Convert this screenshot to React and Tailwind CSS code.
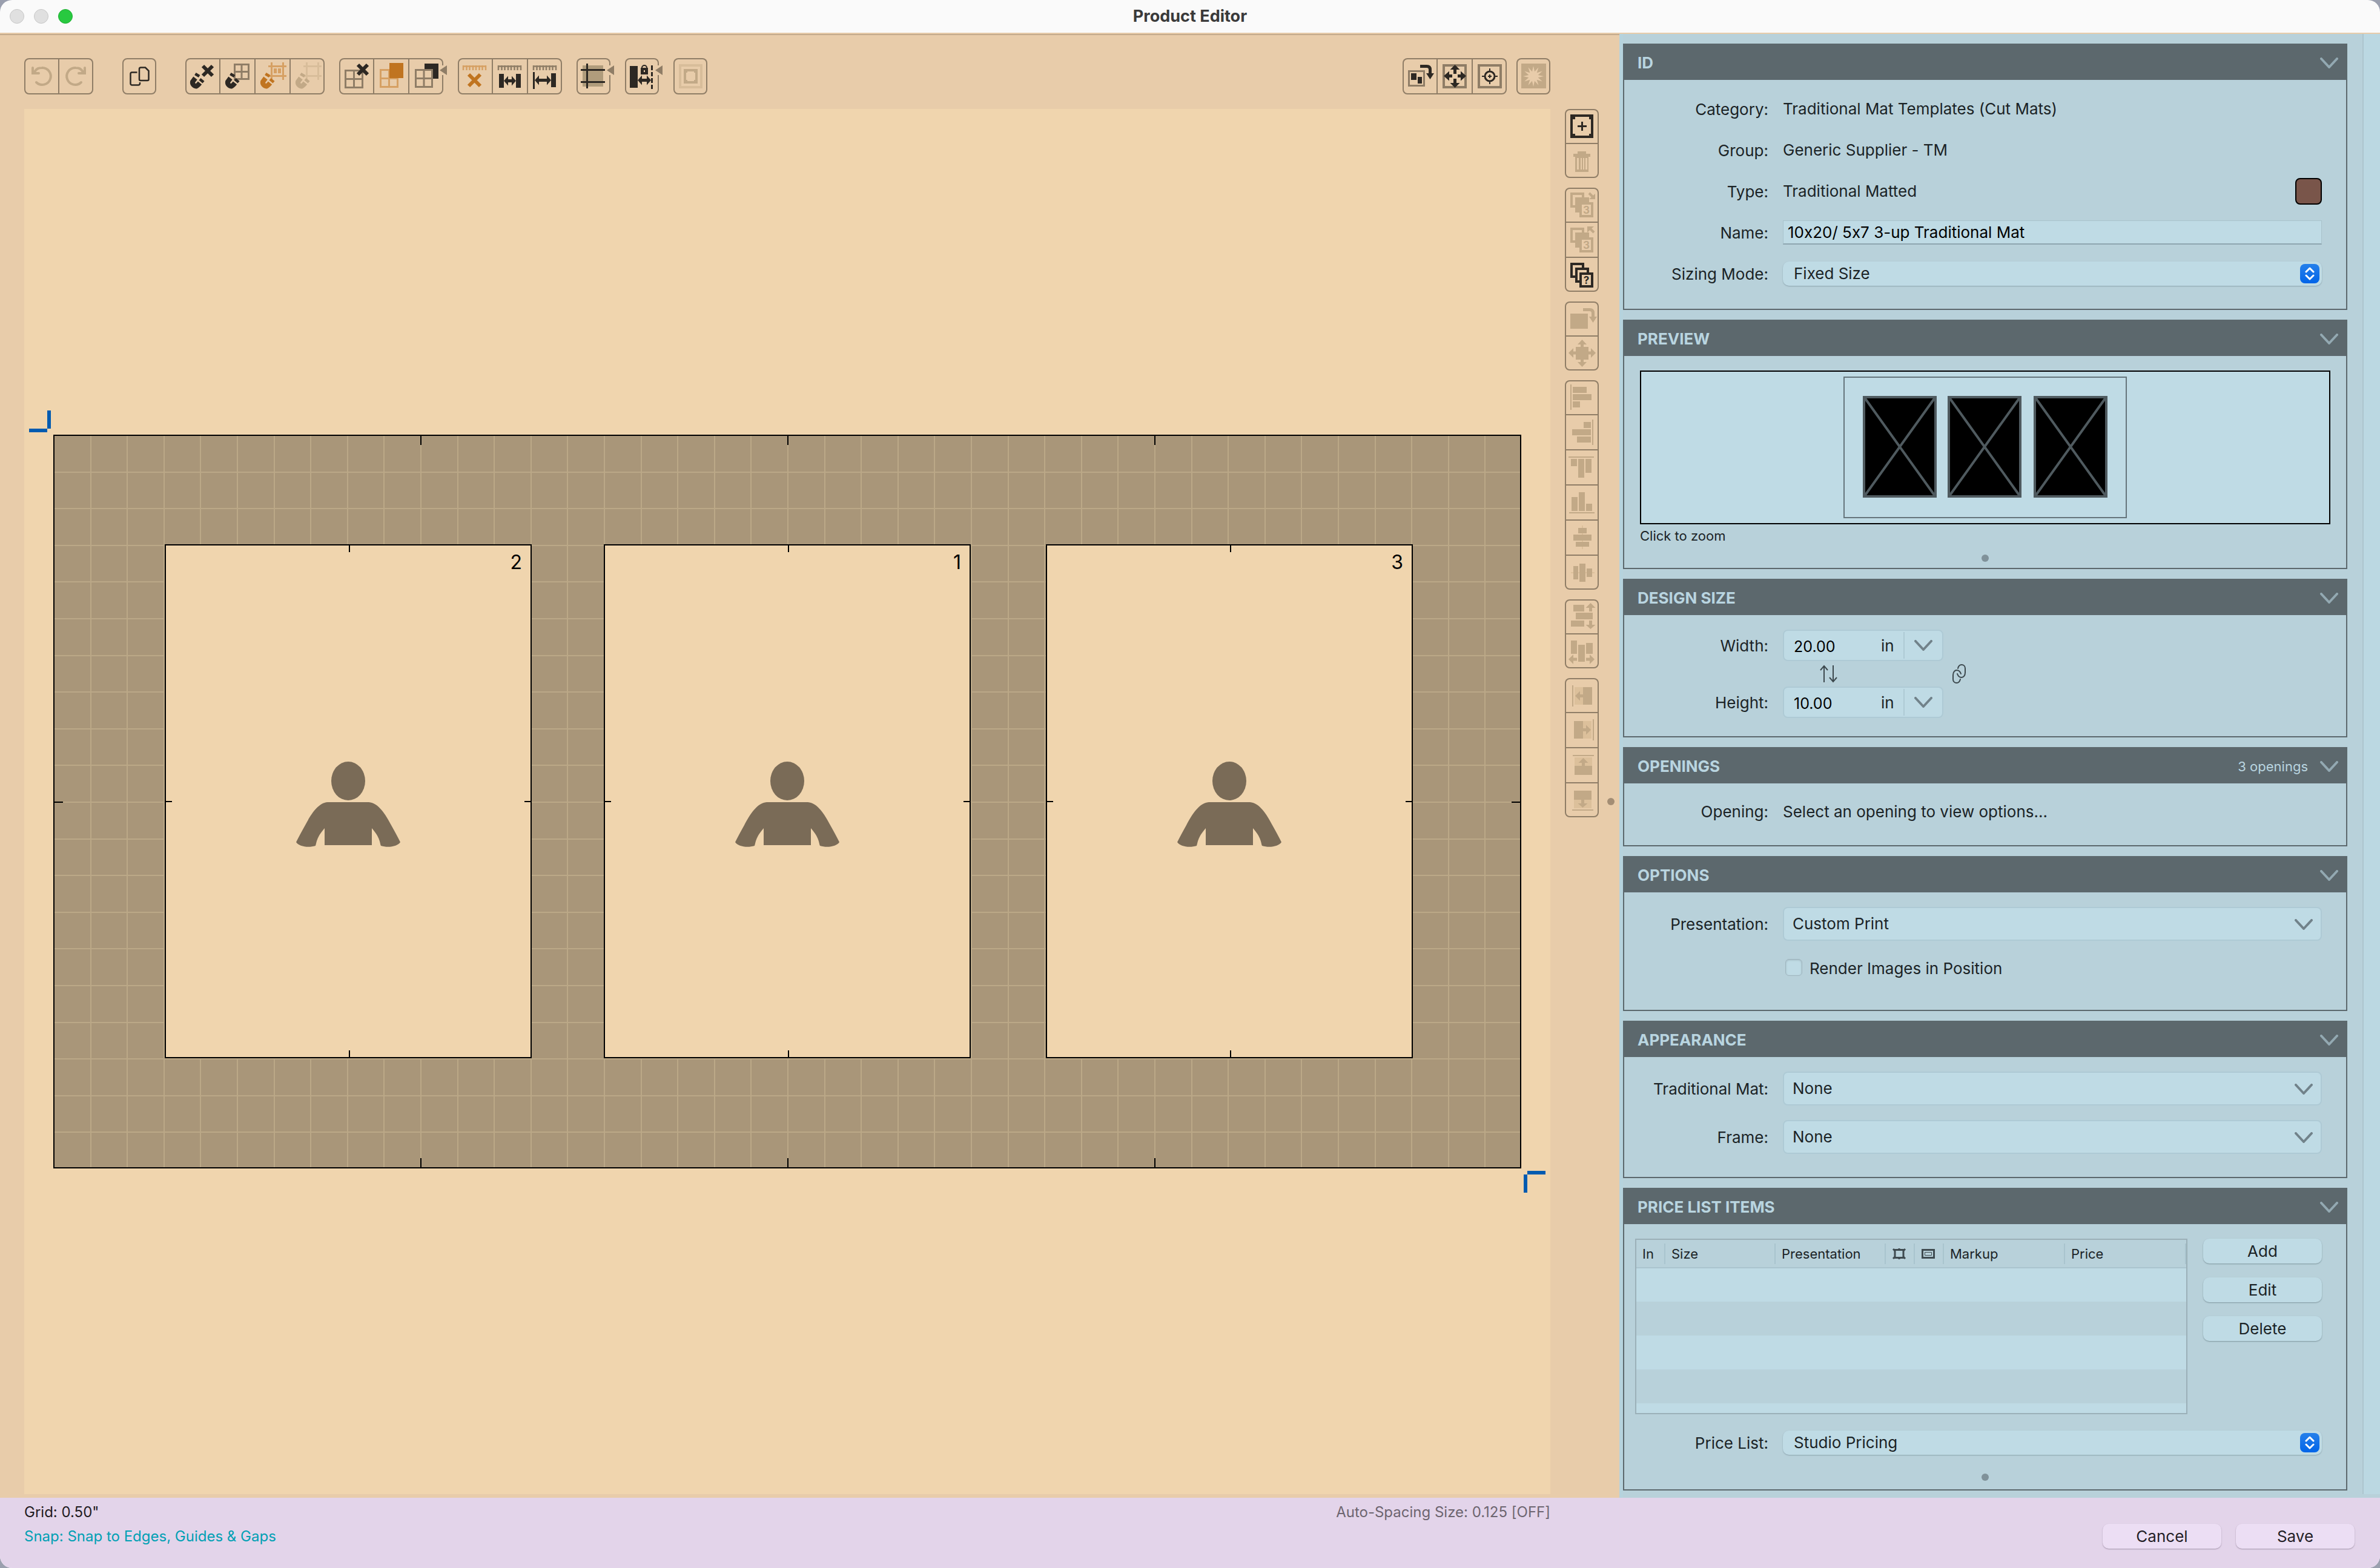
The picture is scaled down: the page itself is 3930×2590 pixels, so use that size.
import { useState } from 'react';

const INK = '#2d2823';
const MID = '#8f7d66';
const DIM = '#c2a987';
const PALE = '#d8bd9a';
const GHOST = '#dcc09b';
const ORANGE = '#c07420';
const PEACH = '#d6a063';
const PAPER = '#e8ccaa';

/* ---------- shared icon parts ---------- */

const Bars = ({ list, fill = DIM }) =>
  list.map(([x, y, w, h]) => <rect key={`${x}-${y}`} x={x} y={y} width={w} height={h} fill={fill} />);

const Cross = ({ x, y, size = 15, color = INK }) => (
  <path d={`M${x} ${y}l${size} ${size}M${x + size} ${y}l${-size} ${size}`} stroke={color} strokeWidth="6" fill="none" />
);

const Magnet = ({ color = INK }) => (
  <g stroke={color} strokeWidth="8" fill="none">
    <path d="M16.500 33L12 39A6.500 6.500 0 0 0 18 46.500Q20.500 45.500 24 41" />
    <path d="M18.500 30l2.500-4" />
    <path d="M25.500 39l3-3.500" />
  </g>
);

const Grid4 = ({ x, y, w, h, color = MID, fill = 'none' }) => (
  <g stroke={color} strokeWidth="3" fill={fill}>
    <rect x={x + 1.5} y={y + 1.5} width={w - 3} height={h - 3} />
    <path d={`M${x + w / 2} ${y}v${h}M${x} ${y + h / 2}h${w}`} />
  </g>
);

const Guides = ({ color }) => (
  <path d="M21 13.500h30M21 29.500h30M26.500 7v29M45.500 7v29" stroke={color} strokeWidth="3" fill="none" />
);

const Ruler = ({ color = MID }) => (
  <path d="M8 13.500h39M9 12v8M14.500 12v8M19.500 12v8M25 12v8M30 12v8M35.500 12v8M40.500 12v8M46 12v8" stroke={color} strokeWidth="2.500" fill="none" />
);

const SpanArrow = ({ x1, x2, y }) => (
  <path
    d={`M${x1} ${y}l7-8v5.500H${x2 - 7}v-5.500l7 8l-7 8v-5.500H${x1 + 7}v5.500z`}
    fill={INK}
  />
);

const TurnArrow = ({ x, y, color }) => (
  <g transform={`translate(${x} ${y})`}>
    <path d="M0 2.500h11q5.500 0 5.500 5.500v7" stroke={color} strokeWidth="5" fill="none" />
    <path d="M10 14h13l-6.500 10z" fill={color} />
  </g>
);

/* ---------- top toolbar icons, drawn on a 56 x 60 cell ---------- */

const Undo = () => (
  <g stroke={DIM} strokeWidth="4" fill="none" strokeLinecap="round">
    <path d="M14 16v9h10" />
    <path d="M16 24C20 17 24 16 29 16A14 14 0 1 1 20 40" />
    <path d="M14 20l5 5h-5z" fill={DIM} strokeWidth="1" />
  </g>
);

const Redo = () => (
  <g transform="translate(56 0) scale(-1 1)">
    <Undo />
  </g>
);

const Duplicate = () => (
  <g stroke={INK} strokeWidth="2.500" fill="none">
    <path d="M30.500 15.500H38L43.500 21V35a2 2 0 0 1-2 2H30a2 2 0 0 1-2-2V18a2.500 2.500 0 0 1 2.500-2.500z" />
    <path d="M24.500 23.500H16a2.500 2.500 0 0 0-2.500 2.500V42a2.500 2.500 0 0 0 2.500 2.500H26.500a2.500 2.500 0 0 0 2.500-2.500V40" />
  </g>
);

const SnapOff = () => (<><Magnet /><Cross x={29} y={13} size={16} /></>);
const SnapGrid = () => (<><Grid4 x={22} y={9} w={26} h={27} /><Magnet /></>);
const SnapEdges = () => (
  <>
    <Guides color={PEACH} />
    <Bars list={[[30, 17, 5, 8], [37, 17, 5, 8]]} fill={PEACH} />
    <Magnet color={ORANGE} />
  </>
);
const SnapGuides = () => (<><Guides color={PALE} /><Magnet color={DIM} /></>);

const GridOff = () => (<><Grid4 x={9} y={19} w={31} h={31} /><Cross x={31} y={11} size={16} /></>);
const GridBack = () => (
  <>
    <Grid4 x={9} y={18} w={31} h={31} color={PEACH} />
    <rect x="25" y="8" width="23" height="25" fill={ORANGE} />
  </>
);
const GridFront = () => (
  <>
    <rect x="25" y="9" width="23" height="25" fill={INK} />
    <Grid4 x={9} y={18} w={30} h={31} fill={PAPER} />
  </>
);

const SpacingOff = () => (<><Ruler color={PEACH} /><Cross x={18} y={27} size={19} color={ORANGE} /></>);
const SpacingBetween = () => (
  <><Ruler /><Bars list={[[10, 26, 8, 23], [38, 26, 8, 23]]} fill={INK} /><SpanArrow x1={18} x2={38} y={37.5} /></>
);
const SpacingEdge = () => (
  <><Ruler /><Bars list={[[8, 23, 3, 28], [38, 25, 8, 23]]} fill={INK} /><SpanArrow x1={11} x2={38} y={36.5} /></>
);

const GuideLines = () => (
  <>
    <rect x="10" y="12" width="34" height="35" fill="#b09c7c" />
    <path d="M7 19.500h40M7 39.500h40M17.500 9v41" stroke={INK} strokeWidth="3" />
  </>
);

const LockSpacing = () => (
  <>
    <Bars list={[[8, 13, 13, 36], [43, 12, 3, 8], [43, 23, 3, 7], [43, 33, 3, 8], [43, 44, 3, 7]]} fill={INK} />
    <rect x="26" y="16" width="12" height="11" fill={INK} />
    <path d="M28 17v-1a4 4 0 0 1 8 0v1" stroke={INK} strokeWidth="2" fill="none" />
    <rect x="31" y="20" width="2" height="3" fill={PAPER} />
    <SpanArrow x1={21} x2={43} y={36.5} />
  </>
);

const Bevel = () => (
  <>
    <rect x="11" y="12" width="35" height="36" fill="none" stroke={PALE} strokeWidth="4" />
    <rect x="19" y="20" width="19" height="20" fill="none" stroke={DIM} strokeWidth="4" />
    <Bars list={[[21, 22, 2, 2], [34, 22, 2, 2], [21, 36, 2, 2], [34, 36, 2, 2]]} />
  </>
);

const RotateAll = () => (
  <>
    <rect x="10.500" y="21.500" width="25" height="24" fill="none" stroke={MID} strokeWidth="3" />
    <Bars list={[[14, 25, 9, 11], [25, 31, 7, 11]]} fill={INK} />
    <TurnArrow x={29} y={11} color={INK} />
  </>
);

const FitAll = () => (
  <>
    <rect x="10" y="12" width="36" height="36" fill="none" stroke={MID} strokeWidth="4" />
    <path
      d="M28.500 11l8 8h-5.500v7h-5v-7h-5.500zM28.500 49l8-8h-5.500v-7h-5v7h-5.500zM10 29.500l9-8v5.500h5v5h-5v5.500zM47 29.500l-9-8v5.500h-5v5h5v5.500z"
      fill={INK}
    />
  </>
);

const Target = () => (
  <>
    <rect x="10" y="12" width="36" height="36" fill="none" stroke={MID} strokeWidth="4" />
    <g stroke={INK} fill="none">
      <circle cx="28" cy="30" r="8" strokeWidth="3" />
      <path d="M15 30h6M35 30h6M28 17v6M28 37v6M25 30h6M28 27v6" strokeWidth="2" />
    </g>
  </>
);

const burstPoints = Array.from({ length: 24 }, (_, i) => {
  const r = i % 2 ? 8 : 17;
  const a = (i * Math.PI) / 12 - Math.PI / 2;
  return `${(28 + r * Math.cos(a)).toFixed(1)},${(30 + r * Math.sin(a)).toFixed(1)}`;
}).join(' ');

const Burst = () => (
  <>
    <rect x="8" y="9" width="41" height="41" fill={DIM} />
    <polygon points={burstPoints} fill={PAPER} />
  </>
);

/* ---------- side toolbar icons, drawn on a 56 x 56 cell ---------- */

const AddOpening = () => (
  <>
    <rect x="11" y="11" width="34" height="35" fill="none" stroke={INK} strokeWidth="4" />
    <Bars list={[[13, 13, 4, 4], [40, 13, 4, 4], [13, 41, 4, 4], [40, 41, 4, 4]]} fill={INK} />
    <path d="M21 28.500h15M28.500 21v15" stroke={INK} strokeWidth="3" />
  </>
);

const Trash = () => (
  <>
    <Bars list={[[21, 12, 14, 5], [14, 16, 28, 5], [17, 21, 22, 25]]} />
    <Bars list={[[20, 23, 3, 19], [26, 23, 2, 19], [30, 23, 2, 19], [34, 23, 3, 19]]} fill={PAPER} />
  </>
);

const Stack = ({ label, color = DIM, solid = true }) => (
  <>
    <rect x="11" y="10" width="19" height="21" fill="none" stroke={color} strokeWidth="4" />
    <rect x="19" y="18" width="19" height="21" fill={solid ? color : PAPER} stroke={color} strokeWidth="4" />
    <rect x="26" y="26" width="19" height="21" fill={PAPER} stroke={color} strokeWidth="4" />
    <text x="35.500" y="43" textAnchor="middle" fontSize="17" fontWeight="700" fill={color}>{label}</text>
  </>
);

const Lower = () => (
  <>
    <Stack label="3" />
    <path d="M40 9l7 7" stroke={DIM} strokeWidth="4" />
    <path d="M50 19h-10l10-9z" fill={DIM} />
  </>
);
const Raise = () => (
  <>
    <Stack label="3" />
    <path d="M41 9l7 7" stroke={DIM} strokeWidth="4" />
    <path d="M37 6h11l-11 10z" fill={DIM} />
  </>
);
const Order = () => <Stack label="?" color={INK} solid={false} />;

const RotateOne = () => (<><Bars list={[[9, 20, 29, 25]]} /><TurnArrow x={30} y={11} color={DIM} /></>);

const CenterOne = () => (
  <>
    <Bars list={[[18, 17, 21, 21]]} />
    <path
      d="M28.500 5l7.500 8h-5v5h-5v-5h-5zM28.500 50l7.500-8h-5v-5h-5v5h-5zM6 27l8-8v5.500h5v5h-5v5.500zM51 27l-8-8v5.500h-5v5h5v5.500z"
      fill={DIM}
    />
  </>
);

const AlignLeft = () => <Bars list={[[9, 7, 2, 42], [13, 11, 23, 10], [13, 23, 31, 10], [13, 35, 12, 10]]} />;
const AlignRight = () => <Bars list={[[45, 7, 2, 42], [31, 11, 12, 10], [12, 23, 31, 10], [20, 35, 23, 10]]} />;
const AlignTop = () => <Bars list={[[6, 10, 42, 2], [10, 14, 10, 12], [22, 14, 10, 31], [34, 14, 10, 23]]} />;
const AlignBottom = () => <Bars list={[[7, 44, 42, 2], [11, 19, 10, 23], [23, 11, 10, 31], [35, 30, 10, 12]]} />;
const CenterVert = () => (
  <>
    <Bars list={[[28, 8, 2, 39]]} fill={GHOST} />
    <Bars list={[[22, 12, 14, 9], [14, 23, 30, 10], [18, 35, 22, 8]]} />
  </>
);
const CenterHoriz = () => (
  <>
    <Bars list={[[10, 27, 39, 2]]} fill={GHOST} />
    <Bars list={[[14, 17, 8, 22], [24, 13, 10, 30], [36, 21, 9, 14]]} />
  </>
);

const SpreadVert = () => (
  <>
    <Bars list={[[14, 9, 18, 11], [18, 22, 28, 11], [10, 35, 22, 10]]} />
    <path d="M42.500 6l8 8h-5.500v6h-5v-6h-5.500zM42.500 49l8-7h-5.500v-7h-5v7h-5.500z" fill={DIM} />
  </>
);
const SpreadHoriz = () => (
  <>
    <Bars list={[[10, 10, 10, 22], [22, 17, 11, 28], [35, 14, 11, 18]]} />
    <path d="M6 41l8-8v5.500h6v5h-6v5.500zM49 41l-8-8v5.500h-6v5h6v5.500z" fill={DIM} />
  </>
);

const PushLeft = () => (
  <>
    <Bars list={[[16, 15, 14, 29]]} fill={GHOST} />
    <Bars list={[[12, 12, 2, 35], [30, 15, 15, 29]]} />
    <path d="M17 29.500l8-8v5.500h6v5h-6v5.500z" fill={DIM} />
  </>
);
const PushRight = () => (
  <>
    <Bars list={[[30, 13, 14, 29]]} fill={GHOST} />
    <Bars list={[[46, 10, 2, 35], [15, 13, 15, 29]]} />
    <path d="M43 27.500l-8-8v5.500h-6v5h6v5.500z" fill={DIM} />
  </>
);
const PushUp = () => (
  <>
    <Bars list={[[16, 15, 29, 14]]} fill={GHOST} />
    <Bars list={[[13, 11, 35, 2], [16, 29, 29, 15]]} />
    <path d="M30.500 16l8 8h-5.500v6h-5v-6h-5.500z" fill={DIM} />
  </>
);
const PushDown = () => (
  <>
    <Bars list={[[15, 27, 29, 14]]} fill={GHOST} />
    <Bars list={[[12, 43, 35, 2], [15, 12, 29, 15]]} />
    <path d="M29.500 40l8-7h-5.500v-7h-5v7h-5.500z" fill={DIM} />
  </>
);

const leftTools = [
  { gap: '', items: [['Undo', Undo], ['Redo', Redo]] },
  { gap: 'ml-12', items: [['Duplicate', Duplicate]] },
  { gap: 'ml-12', items: [['Snap off', SnapOff], ['Snap to grid', SnapGrid], ['Snap to edges', SnapEdges], ['Snap to guides', SnapGuides]] },
  { gap: 'ml-6', menu: true, items: [['Hide grid', GridOff], ['Grid behind', GridBack], ['Grid in front', GridFront]] },
  { gap: 'ml-6', items: [['Auto-spacing off', SpacingOff], ['Space between', SpacingBetween], ['Space to edge', SpacingEdge]] },
  { gap: 'ml-6', menu: true, items: [['Guides', GuideLines]] },
  { gap: 'ml-6', menu: true, items: [['Lock spacing', LockSpacing]] },
  { gap: 'ml-6', items: [['Bevel', Bevel]] },
];

const rightTools = [
  { gap: 'ml-auto', items: [['Rotate design', RotateAll], ['Fit design', FitAll], ['Center view', Target]] },
  { gap: 'ml-4', items: [['Effects', Burst]] },
];

const sideTools = [
  [['Add opening', AddOpening], ['Delete opening', Trash]],
  [['Send back', Lower], ['Bring forward', Raise], ['Show order', Order]],
  [['Rotate opening', RotateOne], ['Center opening', CenterOne]],
  [['Align left', AlignLeft], ['Align right', AlignRight], ['Align top', AlignTop], ['Align bottom', AlignBottom], ['Align middle', CenterVert], ['Align center', CenterHoriz]],
  [['Distribute vertically', SpreadVert], ['Distribute horizontally', SpreadHoriz]],
  [['Push left', PushLeft], ['Push right', PushRight], ['Push up', PushUp], ['Push down', PushDown]],
];

function ToolGroup({ gap, menu, items }) {
  return (
    <div className={`relative flex h-[60px] shrink-0 rounded-lg inset-ring-2 inset-ring-[#8f7d66] ${gap}`}>
      {items.map(([name, Icon]) => (
        <button key={name} aria-label={name} className="box-content w-14 border-r-2 border-[#8f7d66] last-of-type:border-r-0">
          <svg viewBox="0 0 56 60" className="h-[60px] w-14"><Icon /></svg>
        </button>
      ))}
      {menu && (
        <svg viewBox="0 0 12 16" className="absolute top-3 -right-1.5 h-4 w-3 bg-[#e8ccaa]">
          <path d="M12 0v16L0 8z" fill={MID} />
        </svg>
      )}
    </div>
  );
}

function SideGroup({ items }) {
  return (
    <div className="flex w-14 flex-col rounded-lg inset-ring-2 inset-ring-[#8f7d66]">
      {items.map(([name, Icon]) => (
        <button key={name} aria-label={name} className="box-content h-14 border-b-2 border-[#8f7d66] last:border-b-0">
          <svg viewBox="0 0 56 56" className="h-14 w-14"><Icon /></svg>
        </button>
      ))}
    </div>
  );
}

/* ---------- design canvas ---------- */

const openings = [
  { n: 2, x: 233 },
  { n: 1, x: 958 },
  { n: 3, x: 1688 },
];

function Opening({ n, x }) {
  return (
    <g transform={`translate(${x} 720)`}>
      <rect width="604" height="847" fill="#f0d5ae" stroke="#000" strokeWidth="2" />
      <path d="M304 0v12M304 847v-12M0 424h11M604 424h-11" stroke="#000" strokeWidth="2" />
      <text x="589" y="40" textAnchor="end" fontSize="32" fill="#000">{n}</text>
      <g transform="translate(302 390)" fill="#7a6b57">
        <ellipse rx="28" ry="32" />
        <path d="M-34 35H34C50 36 62 56 71 73Q80 89 86 101C82 108 66 111 54 107C52 102 53 94 39 78V106H-39V78C-53 94-52 102-54 107C-66 111-82 108-86 101Q-80 89-71 73C-62 56-50 36-34 35z" />
      </g>
    </g>
  );
}

function Canvas() {
  const cols = Array.from({ length: 39 }, (_, i) => 48 + Math.round((i + 1) * 60.6));
  const rows = Array.from({ length: 19 }, (_, i) => 538 + Math.round((i + 1) * 60.6));
  return (
    <svg viewBox="0 0 2520 2288" className="min-h-0 min-w-0 flex-1 bg-[#f0d5ae]">
      <rect x="49" y="539" width="2422" height="1210" fill="#a99679" stroke="#000" strokeWidth="2" />
      <path
        d={cols.map((x) => `M${x + 1} 540v1208`).join('') + rows.map((y) => `M50 ${y + 1}h2420`).join('')}
        stroke="#bba887"
        strokeWidth="2"
      />
      <path
        d="M655 540v15M1261 540v15M1867 540v15M655 1748v-15M1261 1748v-15M1867 1748v-15M50 1145h14M2470 1145h-14"
        stroke="#000"
        strokeWidth="2"
      />
      {openings.map((o) => <Opening key={o.n} {...o} />)}
      <path d="M41 498v30M8 531h30M2482 1757h30M2479 1760v30" stroke="#005bb0" strokeWidth="6" />
    </svg>
  );
}

/* ---------- sidebar ---------- */

const Chevron = ({ className }) => (
  <svg viewBox="0 0 30 18" className={`pointer-events-none h-[18px] w-[30px] ${className}`} fill="none" stroke="currentColor" strokeWidth="4" strokeLinecap="round" strokeLinejoin="round">
    <path d="M2 2l13 14L28 2" />
  </svg>
);

function Panel({ title, note, children }) {
  const [open, setOpen] = useState(true);
  return (
    <section className="border-2 border-[#5c686d]">
      <button onClick={() => setOpen(!open)} aria-expanded={open} className="flex h-[58px] w-full items-center bg-[#5c686d] pt-0.5 pr-[13px] pl-[22px] text-left text-[#b9d5e0]">
        <span className="flex-1 text-[26px] font-bold">{title}</span>
        {note && <span className="mr-5 text-[22px]">{note}</span>}
        <Chevron className="text-[#93a9b2]" />
      </button>
      {open && children}
    </section>
  );
}

function Row({ label, htmlFor, height = 'h-10', children }) {
  return (
    <div className={`grid grid-cols-[238px_1fr] items-center gap-6 ${height}`}>
      <label htmlFor={htmlFor} className="pt-0.5 text-right">{label}</label>
      {children}
    </div>
  );
}

function PopUp({ id, value }) {
  return (
    <div className="relative h-10">
      <select id={id} className="h-full w-full appearance-none rounded-[10px] bg-[#bfdbe5] pr-12 pl-[18px] shadow-[0_1px_2px_#8ba3ad]">
        <option>{value}</option>
      </select>
      <svg viewBox="0 0 32 32" className="pointer-events-none absolute top-1 right-1 size-8 rounded-lg bg-linear-to-b from-[#2580ea] to-[#0064e8]" fill="none" stroke="#fff" strokeWidth="3" strokeLinecap="round" strokeLinejoin="round">
        <path d="M10 13l6-6 6 6M10 19l6 6 6-6" />
      </svg>
    </div>
  );
}

function DropDown({ id, value }) {
  return (
    <div className="relative h-14">
      <select id={id} className="h-full w-full appearance-none rounded-lg border-2 border-[#aecad5] bg-[#bfdbe5] pr-14 pl-3.5">
        <option>{value}</option>
      </select>
      <Chevron className="absolute top-5 right-[15px] text-[#71828a]" />
    </div>
  );
}

function SizeBox({ id, value }) {
  return (
    <div className="flex h-[52px] w-[265px] items-center rounded-lg border-2 border-[#aecad5] bg-[#bfdbe5]">
      <input id={id} defaultValue={value} className="w-[140px] min-w-0 pt-1 pl-4 text-[25px] text-black outline-none" />
      <span className="w-[57px] pt-0.5 pl-5">in</span>
      <button aria-label={`${id} presets`} className="flex h-11 flex-1 items-center justify-center border-l-2 border-[#aecad5]">
        <Chevron className="text-[#71828a]" />
      </button>
    </div>
  );
}

const Grip = ({ className }) => <div className={`mx-auto size-3 rounded-full bg-[#80929a] ${className}`} />;

const PushButton = ({ children, tone }) => (
  <button className={`h-[41px] w-[196px] rounded-[10px] text-[26px] leading-[41px] ${tone}`}>{children}</button>
);

const blueTone = 'bg-[#bfdbe5] shadow-[0_1px_2px_#7f979f]';
const lilacTone = 'bg-[#ecdef4] shadow-[0_1px_2px_#a395ab]';

function PreviewPanel() {
  return (
    <Panel title="PREVIEW">
      <div className="px-[26px] pt-6 pb-2.5">
        <button aria-label="Zoom preview" className="flex h-[254px] w-full items-center justify-center border-2 border-black bg-[#bfdbe5]">
          <svg viewBox="0 0 468 234" className="h-[234px] w-[468px]">
            <rect x="1" y="1" width="466" height="232" fill="none" stroke="#65757c" strokeWidth="2" />
            {[32, 172, 314].map((x) => (
              <g key={x} transform={`translate(${x} 32)`} stroke="#4f5a5f">
                <rect x="2" y="2" width="118" height="164" fill="#000" strokeWidth="4" />
                <path d="M3 3l116 162M119 3L3 165" strokeWidth="4" />
              </g>
            ))}
          </svg>
        </button>
        <p className="mt-1.5 text-[22px] leading-[26px]">Click to zoom</p>
        <Grip className="mt-[18px]" />
      </div>
    </Panel>
  );
}

const ThinFrame = () => (
  <svg viewBox="0 0 24 20" className="h-5 w-6" fill="none" stroke="#3f4b50" strokeWidth="2">
    <path d="M5 3.500h14v13H5z" strokeWidth="3" />
    <path d="M2 2l3 3M22 2l-3 3M2 18l3-3M22 18l-3-3M12 1v2M12 17v2" strokeWidth="3" />
  </svg>
);

const ThickFrame = () => (
  <svg viewBox="0 0 24 20" className="h-5 w-6" fill="none" stroke="#3f4b50">
    <path d="M2.500 3.500h19v13h-19z" strokeWidth="3" />
    <path d="M6.500 7.500h11v5h-11z" strokeWidth="1" />
  </svg>
);

const columns = [
  ['In', 'w-12'],
  ['Size', 'w-[182px]'],
  ['Presentation', 'w-[182px]'],
  [<ThinFrame />, 'w-12'],
  [<ThickFrame />, 'w-12'],
  ['Markup', 'w-[200px]'],
  ['Price', 'w-[200px]'],
];

function PriceTable() {
  return (
    <div className="h-[290px] flex-1 overflow-hidden border-2 border-[#9bb0b8]">
      <table className="w-full table-fixed border-collapse text-[22px]">
        <thead>
          <tr className="border-b-2 border-[#aac4ce]">
            {columns.map(([name, width], i) => (
              <th key={i} className={`h-[46px] p-0 text-left font-normal ${width}`}>
                <div className="flex h-[34px] items-center border-r-2 border-[#a9c4ce] pl-2.5">{name}</div>
              </th>
            ))}
          </tr>
        </thead>
        <tbody>
          {[0, 1, 2, 3, 4].map((r) => (
            <tr key={r} className="h-14 odd:bg-[#bfdbe5]"><td colSpan={7} /></tr>
          ))}
        </tbody>
      </table>
    </div>
  );
}

function Sidebar() {
  return (
    <aside className="flex w-[1256px] shrink-0 bg-[#b8d1da] text-[26px] leading-8 text-[#1b2326]">
      <div className="flex flex-1 flex-col gap-4 border-l-[6px] border-[#b6d3dd] pt-4 pr-[25px] pb-3">
        <Panel title="ID">
          <div className="flex flex-col gap-7 pt-7 pr-10 pb-[38px]">
            <Row label="Category:"><span>Traditional Mat Templates (Cut Mats)</span></Row>
            <Row label="Group:"><span>Generic Supplier - TM</span></Row>
            <Row label="Type:">
              <div className="flex h-10 items-center justify-between">
                <span>Traditional Matted</span>
                <button aria-label="Type color" className="size-11 rounded-lg border-2 border-black bg-[#79554a]" />
              </div>
            </Row>
            <Row label="Name:" htmlFor="name">
              <input id="name" defaultValue="10x20/ 5x7 3-up Traditional Mat" className="h-10 border border-b-2 border-[#a9c3cc] border-b-[#8ea6b0] bg-[#bfdbe5] pl-[7px] text-black outline-none" />
            </Row>
            <Row label="Sizing Mode:" htmlFor="sizing"><PopUp id="sizing" value="Fixed Size" /></Row>
          </div>
        </Panel>

        <PreviewPanel />

        <Panel title="DESIGN SIZE">
          <div className="pt-6 pr-10 pb-[30px]">
            <Row label="Width:" htmlFor="width" height="h-[52px]"><SizeBox id="width" value="20.00" /></Row>
            <div className="flex h-[42px] items-center pl-[321px] text-[#3c484d]">
              <button aria-label="Swap width and height">
                <svg viewBox="0 0 32 30" className="h-[30px] w-8" fill="none" stroke="currentColor" strokeWidth="2">
                  <path d="M9 29V2M3 9l6-7 6 7M24 1v27M18 21l6 7 6-7" />
                </svg>
              </button>
              <button aria-label="Lock proportions" className="ml-[187px]">
                <svg viewBox="0 0 26 34" className="h-[34px] w-[26px]" fill="none" stroke="currentColor" strokeWidth="2" strokeLinecap="round">
                  <path d="M11 8c1-4 3-6 6-6 4 0 6 3 6 6v7c0 5-3 8-6 8-4 0-6-3-7-6" />
                  <path d="M15 26c-1 4-3 6-6 6-4 0-6-3-6-6v-7c0-5 3-8 6-8 4 0 6 3 7 6" />
                </svg>
              </button>
            </div>
            <Row label="Height:" htmlFor="height" height="h-[52px]"><SizeBox id="height" value="10.00" /></Row>
          </div>
        </Panel>

        <Panel title="OPENINGS" note="3 openings">
          <div className="pt-[26px] pr-10 pb-9">
            <Row label="Opening:"><span className="pt-0.5">Select an opening to view options...</span></Row>
          </div>
        </Panel>

        <Panel title="OPTIONS">
          <div className="pt-6 pr-10 pb-14">
            <Row label="Presentation:" htmlFor="presentation" height="h-14"><DropDown id="presentation" value="Custom Print" /></Row>
            <label className="mt-[30px] flex h-7 items-center gap-3 pl-[266px]">
              <input type="checkbox" className="size-7 appearance-none rounded-md border border-[#9fb5be] bg-[#bfdbe5] shadow-[inset_0_1px_3px_#9fb5be] checked:bg-[#0064e8]" />
              <span className="pt-1">Render Images in Position</span>
            </label>
          </div>
        </Panel>

        <Panel title="APPEARANCE">
          <div className="flex flex-col gap-6 pt-6 pr-10 pb-[38px]">
            <Row label="Traditional Mat:" htmlFor="mat" height="h-14"><DropDown id="mat" value="None" /></Row>
            <Row label="Frame:" htmlFor="frame" height="h-14"><DropDown id="frame" value="None" /></Row>
          </div>
        </Panel>

        <Panel title="PRICE LIST ITEMS">
          <div className="pt-6 pb-3.5">
            <div className="flex gap-[26px] pr-10 pl-[18px]">
              <PriceTable />
              <div className="flex flex-col gap-[23px]">
                <PushButton tone={blueTone}>Add</PushButton>
                <PushButton tone={blueTone}>Edit</PushButton>
                <PushButton tone={blueTone}>Delete</PushButton>
              </div>
            </div>
            <div className="mt-[27px] pr-10">
              <Row label="Price List:" htmlFor="pricelist"><PopUp id="pricelist" value="Studio Pricing" /></Row>
            </div>
            <Grip className="mt-[31px]" />
          </div>
        </Panel>
      </div>
      <div className="mb-1.5 w-[29px] border-l-2 border-[#adc5ce] bg-[#bbd8e2]" />
    </aside>
  );
}

export default function App() {
  return (
    <div className="min-h-screen bg-[#9a9fae] font-[Inter,'Liberation_Sans',sans-serif] [font-feature-settings:'calt'_0]">
      <div className="flex min-h-screen flex-col overflow-hidden rounded-[20px] bg-[#fafafa]">
        <header className="relative flex h-[54px] items-center justify-center">
          <div className="absolute left-4 flex gap-4">
            <button aria-label="Close" className="size-6 rounded-full border border-[#c6c6c6] bg-[#e0e0e0]" />
            <button aria-label="Minimize" className="size-6 rounded-full border border-[#c6c6c6] bg-[#e0e0e0]" />
            <button aria-label="Full screen" className="size-6 rounded-full border border-[#1faf32] bg-[#28c940]" />
          </div>
          <h1 className="text-[27px] font-bold text-[#3a3a3a]">Product Editor</h1>
        </header>

        <div className="flex flex-1 border-t-2 border-[#e8ccaa]">
          <main className="flex min-w-0 flex-1 flex-col bg-[#e8ccaa] pt-10 pb-1.5 pl-10 shadow-[inset_0_2px_0_#c4ab8d]">
            <div className="mb-6 flex pr-[114px]">
              {leftTools.map((g, i) => <ToolGroup key={i} {...g} />)}
              {rightTools.map((g, i) => <ToolGroup key={i} {...g} />)}
            </div>
            <div className="flex min-h-0 flex-1">
              <Canvas />
              <div className="ml-6 flex flex-col gap-4">
                {sideTools.map((items, i) => <SideGroup key={i} items={items} />)}
              </div>
              <div className="flex w-[34px] items-center pl-3.5">
                <div className="size-3 rounded-full bg-[#a38d74]" />
              </div>
            </div>
          </main>
          <Sidebar />
        </div>

        <footer className="flex h-[116px] bg-[#e3d4ea] pr-[42px] pl-10 text-[24px]">
          <div className="flex-1 pt-1 leading-10">
            <p className="text-[#1f1b21]">Grid: 0.50"</p>
            <p className="text-[#00a0b4]">Snap: Snap to Edges, Guides &amp; Gaps</p>
          </div>
          <p className="pt-1 leading-10 text-[#6d6570]">Auto-Spacing Size: 0.125 [OFF]</p>
          <div className="flex w-[1328px] justify-end gap-6 pt-[43px] text-[#241f27]">
            <PushButton tone={lilacTone}>Cancel</PushButton>
            <PushButton tone={lilacTone}>Save</PushButton>
          </div>
        </footer>
      </div>
    </div>
  );
}
